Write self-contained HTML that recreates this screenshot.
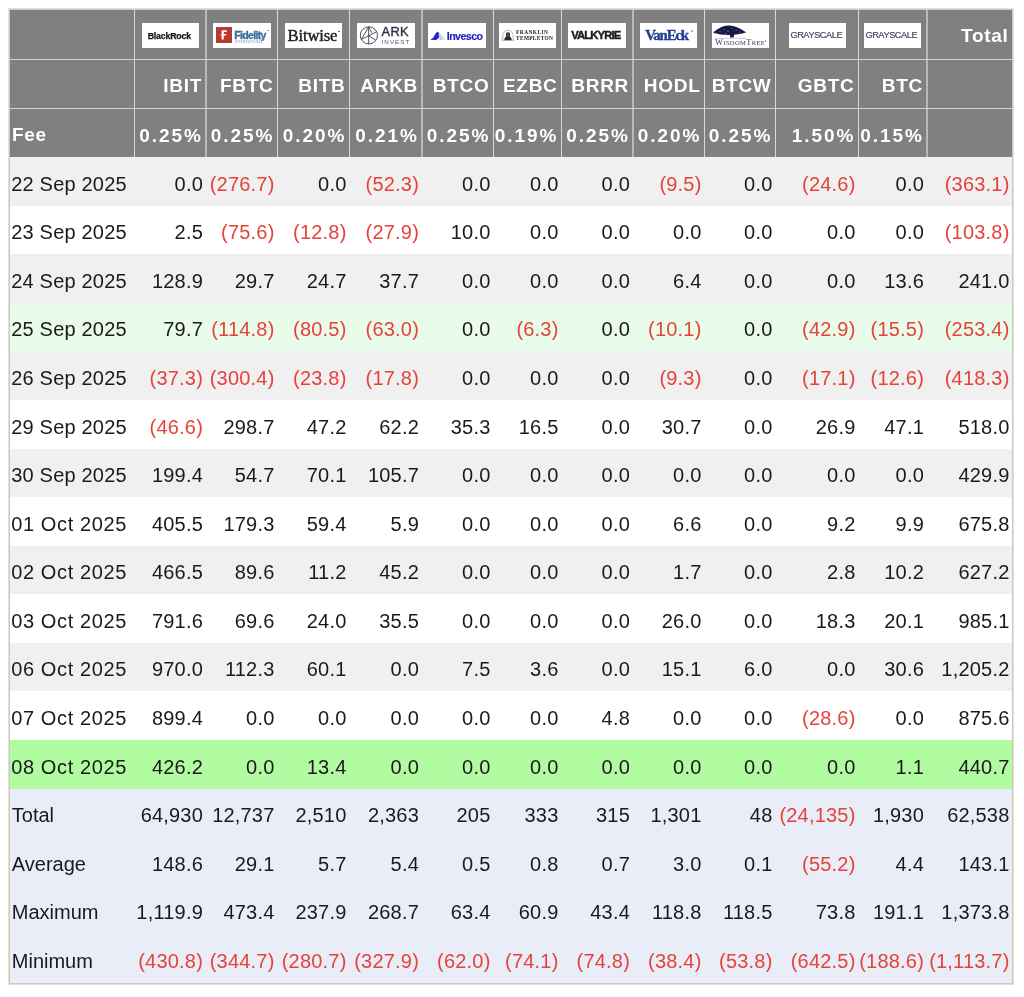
<!DOCTYPE html><html><head><meta charset="utf-8"><style>
html,body{margin:0;padding:0;background:#fff;width:1024px;height:997px;overflow:hidden}
body{position:relative;will-change:transform;font-family:"Liberation Sans",sans-serif}
div{position:absolute;box-sizing:border-box}
.t{white-space:nowrap;font-size:20px;letter-spacing:0.2px;color:#1a1a1a;text-align:right}
.h{white-space:nowrap;font-size:19px;letter-spacing:0.7px;color:#fff;font-weight:bold;text-align:right}
.r{color:#e6423a}
.fee{letter-spacing:2px}
.oct{letter-spacing:0.62px}
.lbl{letter-spacing:0px;text-indent:0.6px}
.lg{background:#fff;top:23px;height:25px;width:57px;overflow:hidden}
.lg span{position:absolute;white-space:nowrap}
</style></head><body>

<div style="left:8px;top:8px;width:1006px;height:977px;background:#e3dfd3"></div>
<div style="left:9px;top:9px;width:1004px;height:975px;background:#d0cabc"></div>
<div style="left:10px;top:10px;width:1002px;height:147px;background:#808080"></div>
<div style="left:10px;top:157.00px;width:1002px;height:49.09px;background:#f0f0f0"></div>
<div style="left:10px;top:205.59px;width:1002px;height:49.09px;background:#ffffff"></div>
<div style="left:10px;top:254.18px;width:1002px;height:49.09px;background:#f0f0f0"></div>
<div style="left:10px;top:302.76px;width:1002px;height:49.09px;background:#e8fce9"></div>
<div style="left:10px;top:351.35px;width:1002px;height:49.09px;background:#f0f0f0"></div>
<div style="left:10px;top:399.94px;width:1002px;height:49.09px;background:#ffffff"></div>
<div style="left:10px;top:448.53px;width:1002px;height:49.09px;background:#f0f0f0"></div>
<div style="left:10px;top:497.12px;width:1002px;height:49.09px;background:#ffffff"></div>
<div style="left:10px;top:545.71px;width:1002px;height:49.09px;background:#f0f0f0"></div>
<div style="left:10px;top:594.29px;width:1002px;height:49.09px;background:#ffffff"></div>
<div style="left:10px;top:642.88px;width:1002px;height:49.09px;background:#f0f0f0"></div>
<div style="left:10px;top:691.47px;width:1002px;height:49.09px;background:#ffffff"></div>
<div style="left:10px;top:740.06px;width:1002px;height:49.09px;background:#b1fba0"></div>
<div style="left:10px;top:788.65px;width:1002px;height:49.09px;background:#e9edf8"></div>
<div style="left:10px;top:837.24px;width:1002px;height:49.09px;background:#e9edf8"></div>
<div style="left:10px;top:885.82px;width:1002px;height:49.09px;background:#e9edf8"></div>
<div style="left:10px;top:934.41px;width:1002px;height:49.09px;background:#e9edf8"></div>
<div style="left:134px;top:10px;width:1px;height:147px;background:#d8d8d8"></div>
<div style="left:205px;top:10px;width:2px;height:147px;background:#b8b8b8"></div>
<div style="left:277px;top:10px;width:1px;height:147px;background:#d8d8d8"></div>
<div style="left:349px;top:10px;width:1px;height:147px;background:#d8d8d8"></div>
<div style="left:421px;top:10px;width:2px;height:147px;background:#b8b8b8"></div>
<div style="left:493px;top:10px;width:1px;height:147px;background:#d8d8d8"></div>
<div style="left:561px;top:10px;width:1px;height:147px;background:#d8d8d8"></div>
<div style="left:632px;top:10px;width:2px;height:147px;background:#b8b8b8"></div>
<div style="left:704px;top:10px;width:1px;height:147px;background:#d8d8d8"></div>
<div style="left:775px;top:10px;width:1px;height:147px;background:#d8d8d8"></div>
<div style="left:858px;top:10px;width:1px;height:147px;background:#d8d8d8"></div>
<div style="left:926px;top:10px;width:2px;height:147px;background:#b8b8b8"></div>
<div style="left:10px;top:59px;width:1002px;height:1px;background:#d2d2d2"></div>
<div style="left:10px;top:108px;width:1002px;height:1px;background:#d2d2d2"></div>
<div class="h" style="left:135px;width:67.00px;top:62.10px;height:48.60px;line-height:48.60px">IBIT</div>
<div class="h" style="left:206.5px;width:67.00px;top:62.10px;height:48.60px;line-height:48.60px">FBTC</div>
<div class="h" style="left:278px;width:67.50px;top:62.10px;height:48.60px;line-height:48.60px">BITB</div>
<div class="h" style="left:350px;width:68.00px;top:62.10px;height:48.60px;line-height:48.60px">ARKB</div>
<div class="h" style="left:422.5px;width:67.00px;top:62.10px;height:48.60px;line-height:48.60px">BTCO</div>
<div class="h" style="left:494px;width:63.50px;top:62.10px;height:48.60px;line-height:48.60px">EZBC</div>
<div class="h" style="left:562px;width:67.00px;top:62.10px;height:48.60px;line-height:48.60px">BRRR</div>
<div class="h" style="left:633.5px;width:67.00px;top:62.10px;height:48.60px;line-height:48.60px">HODL</div>
<div class="h" style="left:705px;width:66.50px;top:62.10px;height:48.60px;line-height:48.60px">BTCW</div>
<div class="h" style="left:776px;width:78.50px;top:62.10px;height:48.60px;line-height:48.60px">GBTC</div>
<div class="h" style="left:859px;width:64.00px;top:62.10px;height:48.60px;line-height:48.60px">BTC</div>
<div class="h" style="left:927.5px;width:81.00px;top:11.80px;height:48.60px;line-height:48.60px">Total</div>
<div class="h" style="left:12.0px;width:124px;top:111.10px;height:48.60px;line-height:48.60px;text-align:left">Fee</div>
<div class="h fee" style="left:135px;width:68.00px;top:111.80px;height:48.60px;line-height:48.60px">0.25%</div>
<div class="h fee" style="left:206.5px;width:68.00px;top:111.80px;height:48.60px;line-height:48.60px">0.25%</div>
<div class="h fee" style="left:278px;width:68.50px;top:111.80px;height:48.60px;line-height:48.60px">0.20%</div>
<div class="h fee" style="left:350px;width:69.00px;top:111.80px;height:48.60px;line-height:48.60px">0.21%</div>
<div class="h fee" style="left:422.5px;width:68.00px;top:111.80px;height:48.60px;line-height:48.60px">0.25%</div>
<div class="h fee" style="left:494px;width:64.50px;top:111.80px;height:48.60px;line-height:48.60px">0.19%</div>
<div class="h fee" style="left:562px;width:68.00px;top:111.80px;height:48.60px;line-height:48.60px">0.25%</div>
<div class="h fee" style="left:633.5px;width:68.00px;top:111.80px;height:48.60px;line-height:48.60px">0.20%</div>
<div class="h fee" style="left:705px;width:67.50px;top:111.80px;height:48.60px;line-height:48.60px">0.25%</div>
<div class="h fee" style="left:776px;width:79.50px;top:111.80px;height:48.60px;line-height:48.60px">1.50%</div>
<div class="h fee" style="left:859px;width:65.00px;top:111.80px;height:48.60px;line-height:48.60px">0.15%</div>
<div class="t" style="left:11.2px;width:124px;top:159.60px;height:48.59px;line-height:48.59px;text-align:left">22 Sep 2025</div>
<div class="t" style="left:135px;width:68.00px;top:159.60px;height:48.59px;line-height:48.59px">0.0</div>
<div class="t r" style="left:206.5px;width:68.00px;top:159.60px;height:48.59px;line-height:48.59px">(276.7)</div>
<div class="t" style="left:278px;width:68.50px;top:159.60px;height:48.59px;line-height:48.59px">0.0</div>
<div class="t r" style="left:350px;width:69.00px;top:159.60px;height:48.59px;line-height:48.59px">(52.3)</div>
<div class="t" style="left:422.5px;width:68.00px;top:159.60px;height:48.59px;line-height:48.59px">0.0</div>
<div class="t" style="left:494px;width:64.50px;top:159.60px;height:48.59px;line-height:48.59px">0.0</div>
<div class="t" style="left:562px;width:68.00px;top:159.60px;height:48.59px;line-height:48.59px">0.0</div>
<div class="t r" style="left:633.5px;width:68.00px;top:159.60px;height:48.59px;line-height:48.59px">(9.5)</div>
<div class="t" style="left:705px;width:67.50px;top:159.60px;height:48.59px;line-height:48.59px">0.0</div>
<div class="t r" style="left:776px;width:79.50px;top:159.60px;height:48.59px;line-height:48.59px">(24.6)</div>
<div class="t" style="left:859px;width:65.00px;top:159.60px;height:48.59px;line-height:48.59px">0.0</div>
<div class="t r" style="left:927.5px;width:82.00px;top:159.60px;height:48.59px;line-height:48.59px">(363.1)</div>
<div class="t" style="left:11.2px;width:124px;top:208.19px;height:48.59px;line-height:48.59px;text-align:left">23 Sep 2025</div>
<div class="t" style="left:135px;width:68.00px;top:208.19px;height:48.59px;line-height:48.59px">2.5</div>
<div class="t r" style="left:206.5px;width:68.00px;top:208.19px;height:48.59px;line-height:48.59px">(75.6)</div>
<div class="t r" style="left:278px;width:68.50px;top:208.19px;height:48.59px;line-height:48.59px">(12.8)</div>
<div class="t r" style="left:350px;width:69.00px;top:208.19px;height:48.59px;line-height:48.59px">(27.9)</div>
<div class="t" style="left:422.5px;width:68.00px;top:208.19px;height:48.59px;line-height:48.59px">10.0</div>
<div class="t" style="left:494px;width:64.50px;top:208.19px;height:48.59px;line-height:48.59px">0.0</div>
<div class="t" style="left:562px;width:68.00px;top:208.19px;height:48.59px;line-height:48.59px">0.0</div>
<div class="t" style="left:633.5px;width:68.00px;top:208.19px;height:48.59px;line-height:48.59px">0.0</div>
<div class="t" style="left:705px;width:67.50px;top:208.19px;height:48.59px;line-height:48.59px">0.0</div>
<div class="t" style="left:776px;width:79.50px;top:208.19px;height:48.59px;line-height:48.59px">0.0</div>
<div class="t" style="left:859px;width:65.00px;top:208.19px;height:48.59px;line-height:48.59px">0.0</div>
<div class="t r" style="left:927.5px;width:82.00px;top:208.19px;height:48.59px;line-height:48.59px">(103.8)</div>
<div class="t" style="left:11.2px;width:124px;top:256.78px;height:48.59px;line-height:48.59px;text-align:left">24 Sep 2025</div>
<div class="t" style="left:135px;width:68.00px;top:256.78px;height:48.59px;line-height:48.59px">128.9</div>
<div class="t" style="left:206.5px;width:68.00px;top:256.78px;height:48.59px;line-height:48.59px">29.7</div>
<div class="t" style="left:278px;width:68.50px;top:256.78px;height:48.59px;line-height:48.59px">24.7</div>
<div class="t" style="left:350px;width:69.00px;top:256.78px;height:48.59px;line-height:48.59px">37.7</div>
<div class="t" style="left:422.5px;width:68.00px;top:256.78px;height:48.59px;line-height:48.59px">0.0</div>
<div class="t" style="left:494px;width:64.50px;top:256.78px;height:48.59px;line-height:48.59px">0.0</div>
<div class="t" style="left:562px;width:68.00px;top:256.78px;height:48.59px;line-height:48.59px">0.0</div>
<div class="t" style="left:633.5px;width:68.00px;top:256.78px;height:48.59px;line-height:48.59px">6.4</div>
<div class="t" style="left:705px;width:67.50px;top:256.78px;height:48.59px;line-height:48.59px">0.0</div>
<div class="t" style="left:776px;width:79.50px;top:256.78px;height:48.59px;line-height:48.59px">0.0</div>
<div class="t" style="left:859px;width:65.00px;top:256.78px;height:48.59px;line-height:48.59px">13.6</div>
<div class="t" style="left:927.5px;width:82.00px;top:256.78px;height:48.59px;line-height:48.59px">241.0</div>
<div class="t" style="left:11.2px;width:124px;top:305.36px;height:48.59px;line-height:48.59px;text-align:left">25 Sep 2025</div>
<div class="t" style="left:135px;width:68.00px;top:305.36px;height:48.59px;line-height:48.59px">79.7</div>
<div class="t r" style="left:206.5px;width:68.00px;top:305.36px;height:48.59px;line-height:48.59px">(114.8)</div>
<div class="t r" style="left:278px;width:68.50px;top:305.36px;height:48.59px;line-height:48.59px">(80.5)</div>
<div class="t r" style="left:350px;width:69.00px;top:305.36px;height:48.59px;line-height:48.59px">(63.0)</div>
<div class="t" style="left:422.5px;width:68.00px;top:305.36px;height:48.59px;line-height:48.59px">0.0</div>
<div class="t r" style="left:494px;width:64.50px;top:305.36px;height:48.59px;line-height:48.59px">(6.3)</div>
<div class="t" style="left:562px;width:68.00px;top:305.36px;height:48.59px;line-height:48.59px">0.0</div>
<div class="t r" style="left:633.5px;width:68.00px;top:305.36px;height:48.59px;line-height:48.59px">(10.1)</div>
<div class="t" style="left:705px;width:67.50px;top:305.36px;height:48.59px;line-height:48.59px">0.0</div>
<div class="t r" style="left:776px;width:79.50px;top:305.36px;height:48.59px;line-height:48.59px">(42.9)</div>
<div class="t r" style="left:859px;width:65.00px;top:305.36px;height:48.59px;line-height:48.59px">(15.5)</div>
<div class="t r" style="left:927.5px;width:82.00px;top:305.36px;height:48.59px;line-height:48.59px">(253.4)</div>
<div class="t" style="left:11.2px;width:124px;top:353.95px;height:48.59px;line-height:48.59px;text-align:left">26 Sep 2025</div>
<div class="t r" style="left:135px;width:68.00px;top:353.95px;height:48.59px;line-height:48.59px">(37.3)</div>
<div class="t r" style="left:206.5px;width:68.00px;top:353.95px;height:48.59px;line-height:48.59px">(300.4)</div>
<div class="t r" style="left:278px;width:68.50px;top:353.95px;height:48.59px;line-height:48.59px">(23.8)</div>
<div class="t r" style="left:350px;width:69.00px;top:353.95px;height:48.59px;line-height:48.59px">(17.8)</div>
<div class="t" style="left:422.5px;width:68.00px;top:353.95px;height:48.59px;line-height:48.59px">0.0</div>
<div class="t" style="left:494px;width:64.50px;top:353.95px;height:48.59px;line-height:48.59px">0.0</div>
<div class="t" style="left:562px;width:68.00px;top:353.95px;height:48.59px;line-height:48.59px">0.0</div>
<div class="t r" style="left:633.5px;width:68.00px;top:353.95px;height:48.59px;line-height:48.59px">(9.3)</div>
<div class="t" style="left:705px;width:67.50px;top:353.95px;height:48.59px;line-height:48.59px">0.0</div>
<div class="t r" style="left:776px;width:79.50px;top:353.95px;height:48.59px;line-height:48.59px">(17.1)</div>
<div class="t r" style="left:859px;width:65.00px;top:353.95px;height:48.59px;line-height:48.59px">(12.6)</div>
<div class="t r" style="left:927.5px;width:82.00px;top:353.95px;height:48.59px;line-height:48.59px">(418.3)</div>
<div class="t" style="left:11.2px;width:124px;top:402.54px;height:48.59px;line-height:48.59px;text-align:left">29 Sep 2025</div>
<div class="t r" style="left:135px;width:68.00px;top:402.54px;height:48.59px;line-height:48.59px">(46.6)</div>
<div class="t" style="left:206.5px;width:68.00px;top:402.54px;height:48.59px;line-height:48.59px">298.7</div>
<div class="t" style="left:278px;width:68.50px;top:402.54px;height:48.59px;line-height:48.59px">47.2</div>
<div class="t" style="left:350px;width:69.00px;top:402.54px;height:48.59px;line-height:48.59px">62.2</div>
<div class="t" style="left:422.5px;width:68.00px;top:402.54px;height:48.59px;line-height:48.59px">35.3</div>
<div class="t" style="left:494px;width:64.50px;top:402.54px;height:48.59px;line-height:48.59px">16.5</div>
<div class="t" style="left:562px;width:68.00px;top:402.54px;height:48.59px;line-height:48.59px">0.0</div>
<div class="t" style="left:633.5px;width:68.00px;top:402.54px;height:48.59px;line-height:48.59px">30.7</div>
<div class="t" style="left:705px;width:67.50px;top:402.54px;height:48.59px;line-height:48.59px">0.0</div>
<div class="t" style="left:776px;width:79.50px;top:402.54px;height:48.59px;line-height:48.59px">26.9</div>
<div class="t" style="left:859px;width:65.00px;top:402.54px;height:48.59px;line-height:48.59px">47.1</div>
<div class="t" style="left:927.5px;width:82.00px;top:402.54px;height:48.59px;line-height:48.59px">518.0</div>
<div class="t" style="left:11.2px;width:124px;top:451.13px;height:48.59px;line-height:48.59px;text-align:left">30 Sep 2025</div>
<div class="t" style="left:135px;width:68.00px;top:451.13px;height:48.59px;line-height:48.59px">199.4</div>
<div class="t" style="left:206.5px;width:68.00px;top:451.13px;height:48.59px;line-height:48.59px">54.7</div>
<div class="t" style="left:278px;width:68.50px;top:451.13px;height:48.59px;line-height:48.59px">70.1</div>
<div class="t" style="left:350px;width:69.00px;top:451.13px;height:48.59px;line-height:48.59px">105.7</div>
<div class="t" style="left:422.5px;width:68.00px;top:451.13px;height:48.59px;line-height:48.59px">0.0</div>
<div class="t" style="left:494px;width:64.50px;top:451.13px;height:48.59px;line-height:48.59px">0.0</div>
<div class="t" style="left:562px;width:68.00px;top:451.13px;height:48.59px;line-height:48.59px">0.0</div>
<div class="t" style="left:633.5px;width:68.00px;top:451.13px;height:48.59px;line-height:48.59px">0.0</div>
<div class="t" style="left:705px;width:67.50px;top:451.13px;height:48.59px;line-height:48.59px">0.0</div>
<div class="t" style="left:776px;width:79.50px;top:451.13px;height:48.59px;line-height:48.59px">0.0</div>
<div class="t" style="left:859px;width:65.00px;top:451.13px;height:48.59px;line-height:48.59px">0.0</div>
<div class="t" style="left:927.5px;width:82.00px;top:451.13px;height:48.59px;line-height:48.59px">429.9</div>
<div class="t oct" style="left:11.2px;width:124px;top:499.72px;height:48.59px;line-height:48.59px;text-align:left">01 Oct 2025</div>
<div class="t" style="left:135px;width:68.00px;top:499.72px;height:48.59px;line-height:48.59px">405.5</div>
<div class="t" style="left:206.5px;width:68.00px;top:499.72px;height:48.59px;line-height:48.59px">179.3</div>
<div class="t" style="left:278px;width:68.50px;top:499.72px;height:48.59px;line-height:48.59px">59.4</div>
<div class="t" style="left:350px;width:69.00px;top:499.72px;height:48.59px;line-height:48.59px">5.9</div>
<div class="t" style="left:422.5px;width:68.00px;top:499.72px;height:48.59px;line-height:48.59px">0.0</div>
<div class="t" style="left:494px;width:64.50px;top:499.72px;height:48.59px;line-height:48.59px">0.0</div>
<div class="t" style="left:562px;width:68.00px;top:499.72px;height:48.59px;line-height:48.59px">0.0</div>
<div class="t" style="left:633.5px;width:68.00px;top:499.72px;height:48.59px;line-height:48.59px">6.6</div>
<div class="t" style="left:705px;width:67.50px;top:499.72px;height:48.59px;line-height:48.59px">0.0</div>
<div class="t" style="left:776px;width:79.50px;top:499.72px;height:48.59px;line-height:48.59px">9.2</div>
<div class="t" style="left:859px;width:65.00px;top:499.72px;height:48.59px;line-height:48.59px">9.9</div>
<div class="t" style="left:927.5px;width:82.00px;top:499.72px;height:48.59px;line-height:48.59px">675.8</div>
<div class="t oct" style="left:11.2px;width:124px;top:548.31px;height:48.59px;line-height:48.59px;text-align:left">02 Oct 2025</div>
<div class="t" style="left:135px;width:68.00px;top:548.31px;height:48.59px;line-height:48.59px">466.5</div>
<div class="t" style="left:206.5px;width:68.00px;top:548.31px;height:48.59px;line-height:48.59px">89.6</div>
<div class="t" style="left:278px;width:68.50px;top:548.31px;height:48.59px;line-height:48.59px">11.2</div>
<div class="t" style="left:350px;width:69.00px;top:548.31px;height:48.59px;line-height:48.59px">45.2</div>
<div class="t" style="left:422.5px;width:68.00px;top:548.31px;height:48.59px;line-height:48.59px">0.0</div>
<div class="t" style="left:494px;width:64.50px;top:548.31px;height:48.59px;line-height:48.59px">0.0</div>
<div class="t" style="left:562px;width:68.00px;top:548.31px;height:48.59px;line-height:48.59px">0.0</div>
<div class="t" style="left:633.5px;width:68.00px;top:548.31px;height:48.59px;line-height:48.59px">1.7</div>
<div class="t" style="left:705px;width:67.50px;top:548.31px;height:48.59px;line-height:48.59px">0.0</div>
<div class="t" style="left:776px;width:79.50px;top:548.31px;height:48.59px;line-height:48.59px">2.8</div>
<div class="t" style="left:859px;width:65.00px;top:548.31px;height:48.59px;line-height:48.59px">10.2</div>
<div class="t" style="left:927.5px;width:82.00px;top:548.31px;height:48.59px;line-height:48.59px">627.2</div>
<div class="t oct" style="left:11.2px;width:124px;top:596.89px;height:48.59px;line-height:48.59px;text-align:left">03 Oct 2025</div>
<div class="t" style="left:135px;width:68.00px;top:596.89px;height:48.59px;line-height:48.59px">791.6</div>
<div class="t" style="left:206.5px;width:68.00px;top:596.89px;height:48.59px;line-height:48.59px">69.6</div>
<div class="t" style="left:278px;width:68.50px;top:596.89px;height:48.59px;line-height:48.59px">24.0</div>
<div class="t" style="left:350px;width:69.00px;top:596.89px;height:48.59px;line-height:48.59px">35.5</div>
<div class="t" style="left:422.5px;width:68.00px;top:596.89px;height:48.59px;line-height:48.59px">0.0</div>
<div class="t" style="left:494px;width:64.50px;top:596.89px;height:48.59px;line-height:48.59px">0.0</div>
<div class="t" style="left:562px;width:68.00px;top:596.89px;height:48.59px;line-height:48.59px">0.0</div>
<div class="t" style="left:633.5px;width:68.00px;top:596.89px;height:48.59px;line-height:48.59px">26.0</div>
<div class="t" style="left:705px;width:67.50px;top:596.89px;height:48.59px;line-height:48.59px">0.0</div>
<div class="t" style="left:776px;width:79.50px;top:596.89px;height:48.59px;line-height:48.59px">18.3</div>
<div class="t" style="left:859px;width:65.00px;top:596.89px;height:48.59px;line-height:48.59px">20.1</div>
<div class="t" style="left:927.5px;width:82.00px;top:596.89px;height:48.59px;line-height:48.59px">985.1</div>
<div class="t oct" style="left:11.2px;width:124px;top:645.48px;height:48.59px;line-height:48.59px;text-align:left">06 Oct 2025</div>
<div class="t" style="left:135px;width:68.00px;top:645.48px;height:48.59px;line-height:48.59px">970.0</div>
<div class="t" style="left:206.5px;width:68.00px;top:645.48px;height:48.59px;line-height:48.59px">112.3</div>
<div class="t" style="left:278px;width:68.50px;top:645.48px;height:48.59px;line-height:48.59px">60.1</div>
<div class="t" style="left:350px;width:69.00px;top:645.48px;height:48.59px;line-height:48.59px">0.0</div>
<div class="t" style="left:422.5px;width:68.00px;top:645.48px;height:48.59px;line-height:48.59px">7.5</div>
<div class="t" style="left:494px;width:64.50px;top:645.48px;height:48.59px;line-height:48.59px">3.6</div>
<div class="t" style="left:562px;width:68.00px;top:645.48px;height:48.59px;line-height:48.59px">0.0</div>
<div class="t" style="left:633.5px;width:68.00px;top:645.48px;height:48.59px;line-height:48.59px">15.1</div>
<div class="t" style="left:705px;width:67.50px;top:645.48px;height:48.59px;line-height:48.59px">6.0</div>
<div class="t" style="left:776px;width:79.50px;top:645.48px;height:48.59px;line-height:48.59px">0.0</div>
<div class="t" style="left:859px;width:65.00px;top:645.48px;height:48.59px;line-height:48.59px">30.6</div>
<div class="t" style="left:927.5px;width:82.00px;top:645.48px;height:48.59px;line-height:48.59px">1,205.2</div>
<div class="t oct" style="left:11.2px;width:124px;top:694.07px;height:48.59px;line-height:48.59px;text-align:left">07 Oct 2025</div>
<div class="t" style="left:135px;width:68.00px;top:694.07px;height:48.59px;line-height:48.59px">899.4</div>
<div class="t" style="left:206.5px;width:68.00px;top:694.07px;height:48.59px;line-height:48.59px">0.0</div>
<div class="t" style="left:278px;width:68.50px;top:694.07px;height:48.59px;line-height:48.59px">0.0</div>
<div class="t" style="left:350px;width:69.00px;top:694.07px;height:48.59px;line-height:48.59px">0.0</div>
<div class="t" style="left:422.5px;width:68.00px;top:694.07px;height:48.59px;line-height:48.59px">0.0</div>
<div class="t" style="left:494px;width:64.50px;top:694.07px;height:48.59px;line-height:48.59px">0.0</div>
<div class="t" style="left:562px;width:68.00px;top:694.07px;height:48.59px;line-height:48.59px">4.8</div>
<div class="t" style="left:633.5px;width:68.00px;top:694.07px;height:48.59px;line-height:48.59px">0.0</div>
<div class="t" style="left:705px;width:67.50px;top:694.07px;height:48.59px;line-height:48.59px">0.0</div>
<div class="t r" style="left:776px;width:79.50px;top:694.07px;height:48.59px;line-height:48.59px">(28.6)</div>
<div class="t" style="left:859px;width:65.00px;top:694.07px;height:48.59px;line-height:48.59px">0.0</div>
<div class="t" style="left:927.5px;width:82.00px;top:694.07px;height:48.59px;line-height:48.59px">875.6</div>
<div class="t oct" style="left:11.2px;width:124px;top:742.66px;height:48.59px;line-height:48.59px;text-align:left">08 Oct 2025</div>
<div class="t" style="left:135px;width:68.00px;top:742.66px;height:48.59px;line-height:48.59px">426.2</div>
<div class="t" style="left:206.5px;width:68.00px;top:742.66px;height:48.59px;line-height:48.59px">0.0</div>
<div class="t" style="left:278px;width:68.50px;top:742.66px;height:48.59px;line-height:48.59px">13.4</div>
<div class="t" style="left:350px;width:69.00px;top:742.66px;height:48.59px;line-height:48.59px">0.0</div>
<div class="t" style="left:422.5px;width:68.00px;top:742.66px;height:48.59px;line-height:48.59px">0.0</div>
<div class="t" style="left:494px;width:64.50px;top:742.66px;height:48.59px;line-height:48.59px">0.0</div>
<div class="t" style="left:562px;width:68.00px;top:742.66px;height:48.59px;line-height:48.59px">0.0</div>
<div class="t" style="left:633.5px;width:68.00px;top:742.66px;height:48.59px;line-height:48.59px">0.0</div>
<div class="t" style="left:705px;width:67.50px;top:742.66px;height:48.59px;line-height:48.59px">0.0</div>
<div class="t" style="left:776px;width:79.50px;top:742.66px;height:48.59px;line-height:48.59px">0.0</div>
<div class="t" style="left:859px;width:65.00px;top:742.66px;height:48.59px;line-height:48.59px">1.1</div>
<div class="t" style="left:927.5px;width:82.00px;top:742.66px;height:48.59px;line-height:48.59px">440.7</div>
<div class="t lbl" style="left:11.2px;width:124px;top:791.25px;height:48.59px;line-height:48.59px;text-align:left">Total</div>
<div class="t" style="left:135px;width:68.00px;top:791.25px;height:48.59px;line-height:48.59px">64,930</div>
<div class="t" style="left:206.5px;width:68.00px;top:791.25px;height:48.59px;line-height:48.59px">12,737</div>
<div class="t" style="left:278px;width:68.50px;top:791.25px;height:48.59px;line-height:48.59px">2,510</div>
<div class="t" style="left:350px;width:69.00px;top:791.25px;height:48.59px;line-height:48.59px">2,363</div>
<div class="t" style="left:422.5px;width:68.00px;top:791.25px;height:48.59px;line-height:48.59px">205</div>
<div class="t" style="left:494px;width:64.50px;top:791.25px;height:48.59px;line-height:48.59px">333</div>
<div class="t" style="left:562px;width:68.00px;top:791.25px;height:48.59px;line-height:48.59px">315</div>
<div class="t" style="left:633.5px;width:68.00px;top:791.25px;height:48.59px;line-height:48.59px">1,301</div>
<div class="t" style="left:705px;width:67.50px;top:791.25px;height:48.59px;line-height:48.59px">48</div>
<div class="t r" style="left:776px;width:79.50px;top:791.25px;height:48.59px;line-height:48.59px">(24,135)</div>
<div class="t" style="left:859px;width:65.00px;top:791.25px;height:48.59px;line-height:48.59px">1,930</div>
<div class="t" style="left:927.5px;width:82.00px;top:791.25px;height:48.59px;line-height:48.59px">62,538</div>
<div class="t lbl" style="left:11.2px;width:124px;top:839.84px;height:48.59px;line-height:48.59px;text-align:left">Average</div>
<div class="t" style="left:135px;width:68.00px;top:839.84px;height:48.59px;line-height:48.59px">148.6</div>
<div class="t" style="left:206.5px;width:68.00px;top:839.84px;height:48.59px;line-height:48.59px">29.1</div>
<div class="t" style="left:278px;width:68.50px;top:839.84px;height:48.59px;line-height:48.59px">5.7</div>
<div class="t" style="left:350px;width:69.00px;top:839.84px;height:48.59px;line-height:48.59px">5.4</div>
<div class="t" style="left:422.5px;width:68.00px;top:839.84px;height:48.59px;line-height:48.59px">0.5</div>
<div class="t" style="left:494px;width:64.50px;top:839.84px;height:48.59px;line-height:48.59px">0.8</div>
<div class="t" style="left:562px;width:68.00px;top:839.84px;height:48.59px;line-height:48.59px">0.7</div>
<div class="t" style="left:633.5px;width:68.00px;top:839.84px;height:48.59px;line-height:48.59px">3.0</div>
<div class="t" style="left:705px;width:67.50px;top:839.84px;height:48.59px;line-height:48.59px">0.1</div>
<div class="t r" style="left:776px;width:79.50px;top:839.84px;height:48.59px;line-height:48.59px">(55.2)</div>
<div class="t" style="left:859px;width:65.00px;top:839.84px;height:48.59px;line-height:48.59px">4.4</div>
<div class="t" style="left:927.5px;width:82.00px;top:839.84px;height:48.59px;line-height:48.59px">143.1</div>
<div class="t lbl" style="left:11.2px;width:124px;top:888.42px;height:48.59px;line-height:48.59px;text-align:left">Maximum</div>
<div class="t" style="left:135px;width:68.00px;top:888.42px;height:48.59px;line-height:48.59px">1,119.9</div>
<div class="t" style="left:206.5px;width:68.00px;top:888.42px;height:48.59px;line-height:48.59px">473.4</div>
<div class="t" style="left:278px;width:68.50px;top:888.42px;height:48.59px;line-height:48.59px">237.9</div>
<div class="t" style="left:350px;width:69.00px;top:888.42px;height:48.59px;line-height:48.59px">268.7</div>
<div class="t" style="left:422.5px;width:68.00px;top:888.42px;height:48.59px;line-height:48.59px">63.4</div>
<div class="t" style="left:494px;width:64.50px;top:888.42px;height:48.59px;line-height:48.59px">60.9</div>
<div class="t" style="left:562px;width:68.00px;top:888.42px;height:48.59px;line-height:48.59px">43.4</div>
<div class="t" style="left:633.5px;width:68.00px;top:888.42px;height:48.59px;line-height:48.59px">118.8</div>
<div class="t" style="left:705px;width:67.50px;top:888.42px;height:48.59px;line-height:48.59px">118.5</div>
<div class="t" style="left:776px;width:79.50px;top:888.42px;height:48.59px;line-height:48.59px">73.8</div>
<div class="t" style="left:859px;width:65.00px;top:888.42px;height:48.59px;line-height:48.59px">191.1</div>
<div class="t" style="left:927.5px;width:82.00px;top:888.42px;height:48.59px;line-height:48.59px">1,373.8</div>
<div class="t lbl" style="left:11.2px;width:124px;top:937.01px;height:48.59px;line-height:48.59px;text-align:left">Minimum</div>
<div class="t r" style="left:135px;width:68.00px;top:937.01px;height:48.59px;line-height:48.59px">(430.8)</div>
<div class="t r" style="left:206.5px;width:68.00px;top:937.01px;height:48.59px;line-height:48.59px">(344.7)</div>
<div class="t r" style="left:278px;width:68.50px;top:937.01px;height:48.59px;line-height:48.59px">(280.7)</div>
<div class="t r" style="left:350px;width:69.00px;top:937.01px;height:48.59px;line-height:48.59px">(327.9)</div>
<div class="t r" style="left:422.5px;width:68.00px;top:937.01px;height:48.59px;line-height:48.59px">(62.0)</div>
<div class="t r" style="left:494px;width:64.50px;top:937.01px;height:48.59px;line-height:48.59px">(74.1)</div>
<div class="t r" style="left:562px;width:68.00px;top:937.01px;height:48.59px;line-height:48.59px">(74.8)</div>
<div class="t r" style="left:633.5px;width:68.00px;top:937.01px;height:48.59px;line-height:48.59px">(38.4)</div>
<div class="t r" style="left:705px;width:67.50px;top:937.01px;height:48.59px;line-height:48.59px">(53.8)</div>
<div class="t r" style="left:776px;width:79.50px;top:937.01px;height:48.59px;line-height:48.59px">(642.5)</div>
<div class="t r" style="left:859px;width:65.00px;top:937.01px;height:48.59px;line-height:48.59px">(188.6)</div>
<div class="t r" style="left:927.5px;width:82.00px;top:937.01px;height:48.59px;line-height:48.59px">(1,113.7)</div>
<div class="lg" style="left:142px;width:57px">
 <span style="left:5.7px;top:8.6px;font:bold 8.8px/8.8px 'Liberation Sans',sans-serif;letter-spacing:-0.2px;-webkit-text-stroke:0.25px #141414;color:#141414">BlackRock</span>
</div>
<div class="lg" style="left:213px;width:58px">
 <span style="left:2.9px;top:4.3px;width:15.8px;height:15.7px;background:#b73a30"></span>
 <svg style="position:absolute;left:2.9px;top:4.3px" width="16" height="16" viewBox="0 0 16 16"><path d="M5.6 3.2 H10.8 V4.9 H7.8 V6.9 H10.2 V8.5 H7.8 V12.4 H5.6 Z" fill="#fff"/><path d="M4.4 7.6 H5.6 M4.6 9 H5.6" stroke="#fff" stroke-width="0.6"/></svg>
 <span style="left:21.2px;top:6.6px;font:bold 10.6px/10.6px 'Liberation Sans',sans-serif;letter-spacing:-0.7px;-webkit-text-stroke:0.3px #3b6a9b;color:#3b6a9b">Fidelity</span>
 <span style="left:22px;top:19px;font:bold 2.6px/2.6px 'Liberation Sans',sans-serif;letter-spacing:0.55px;color:#8fadcc">INTERNATIONAL</span>
 <span style="left:54px;top:6.5px;width:2px;height:0.6px;background:#8aa"></span>
</div>
<div class="lg" style="left:285px;width:57px">
 <span style="left:2.6px;top:4.9px;font:16.6px/16.6px 'Liberation Serif',serif;letter-spacing:-0.15px;-webkit-text-stroke:0.4px #1a1a1a;color:#1a1a1a">Bitwise</span>
 <span style="left:53.3px;top:7.6px;width:1.6px;height:1.6px;border-radius:1px;background:#555"></span>
</div>
<div class="lg" style="left:357px;width:58px">
 <svg style="position:absolute;left:0;top:0" width="24" height="25" viewBox="0 0 24 25"><g fill="none" stroke="#3a3a52" stroke-width="0.9"><circle cx="11.9" cy="12.4" r="8.6"/><path d="M11.7 3.8 V21 M4.3 16.4 L11.7 3.8 M4.3 16.4 L19.2 9 M11.7 12.8 L18.6 17 M11.7 4.2 L14.8 9.8"/></g></svg>
 <span style="left:24.4px;top:2.5px;font:12.8px/12.8px 'Liberation Sans',sans-serif;letter-spacing:0.45px;-webkit-text-stroke:0.35px #2b2b45;color:#2b2b45">ARK</span>
 <span style="left:24.6px;top:15.8px;font:6.2px/6.2px 'Liberation Sans',sans-serif;letter-spacing:1.05px;color:#55556a">INVEST</span>
</div>
<div class="lg" style="left:428px;width:58px">
 <svg style="position:absolute;left:0;top:0" width="18" height="25" viewBox="0 0 18 25"><path d="M2.7 16.6 L5.2 14.8 L7.6 10.4 L9.6 8.6 L10.6 9.6 L11.2 13.5 L10 16 L8.6 16.6 L7.6 17.2 L5.6 16.8 L3.6 17.3 Z" fill="#2323c9"/><path d="M10.6 9.6 L16.3 16.6 M10.6 12 L14.2 16.6 M11 14.4 L12.8 16.8" stroke="#8c8ce0" stroke-width="0.8" fill="none"/></svg>
 <span style="left:18.8px;top:7.5px;font:bold 10.6px/10.6px 'Liberation Sans',sans-serif;letter-spacing:-0.55px;-webkit-text-stroke:0.15px #2222c8;color:#2222c8">Invesco</span>
</div>
<div class="lg" style="left:498.5px;width:57px">
 <svg style="position:absolute;left:0;top:0" width="17" height="25" viewBox="0 0 17 25"><path d="M3.8 17 V12.8 A5.2 5.6 0 0 1 14.2 12.8 V17" fill="none" stroke="#999" stroke-width="0.7"/><ellipse cx="9" cy="11.6" rx="2.1" ry="2.6" fill="#555"/><path d="M5.2 17.2 C5.4 14.6 6.8 13.6 9 13.6 C11.2 13.6 12.6 14.6 12.8 17.2 Z" fill="#2a2a2a"/><path d="M7.6 10 V16.5 M10.4 10 V16.5" stroke="#222" stroke-width="0.8"/><path d="M2.6 17.3 H15.4" stroke="#888" stroke-width="0.6"/></svg>
 <span style="left:17.6px;top:6.9px;font:bold 5.4px/5.4px 'Liberation Serif',serif;letter-spacing:0.45px;color:#222">FRANKLIN</span>
 <span style="left:17.6px;top:12.9px;font:bold 5.4px/5.4px 'Liberation Serif',serif;letter-spacing:0.3px;color:#222">TEMPLETON</span>
</div>
<div class="lg" style="left:568px;width:58px">
 <span style="left:3.2px;top:6.9px;font:bold 11.3px/11.3px 'Liberation Sans',sans-serif;letter-spacing:-0.9px;-webkit-text-stroke:0.45px #1e1e1e;color:#1e1e1e">VALKYRIE</span>
</div>
<div class="lg" style="left:640px;width:57px">
 <span style="left:5.2px;top:5.2px;font:bold 14.8px/14.8px 'Liberation Serif',serif;letter-spacing:-1.15px;-webkit-text-stroke:0.35px #1f3e8c;color:#1f3e8c">VanEck</span>
 <span style="left:51px;top:7px;width:1.6px;height:1.6px;border-radius:1px;background:#8898c0"></span>
</div>
<div class="lg" style="left:712px;width:56.5px">
 <svg style="position:absolute;left:0;top:0" width="40" height="18" viewBox="0 0 40 18"><path d="M1.3 9.8 C3 7.6 8 4.6 12 3.1 C15 2.2 19 2.3 22 3.3 C27 5 31 7.2 34 9.3 C32 10.6 27 11.3 22 11.7 L21.8 14.5 L18 14.5 L18 12 C13 12.1 6 11.6 1.3 9.8 Z" fill="#17174a"/><g fill="#fff" opacity="0.55"><circle cx="8" cy="8.6" r="0.6"/><circle cx="12" cy="6.4" r="0.5"/><circle cx="16" cy="8.2" r="0.6"/><circle cx="20" cy="5.2" r="0.5"/><circle cx="24" cy="7.6" r="0.5"/><circle cx="28" cy="9" r="0.6"/><circle cx="14" cy="10.6" r="0.5"/><circle cx="5" cy="10.2" r="0.5"/></g><path d="M2.5 15.3 H34" stroke="#c4c4d8" stroke-width="0.9"/></svg>
 <span style="left:3px;top:16.2px;font:8.4px/8.4px 'Liberation Serif',serif;letter-spacing:0.35px;color:#3a3a6a">W<span style="position:static;font-size:6.6px">ISDOM</span>T<span style="position:static;font-size:6.6px">REE</span></span><span style="left:52.6px;top:17.4px;width:1.4px;height:1.4px;border-radius:1px;background:#8888a8"></span>
</div>
<div class="lg" style="left:789px;width:57px">
 <span style="left:1.4px;top:7.7px;font:9.2px/9.2px 'Liberation Sans',sans-serif;letter-spacing:-0.4px;-webkit-text-stroke:0.2px #4a4562;color:#4a4562">GRAYSCALE</span>
</div>
<div class="lg" style="left:864px;width:57px">
 <span style="left:1.4px;top:7.7px;font:9.2px/9.2px 'Liberation Sans',sans-serif;letter-spacing:-0.4px;-webkit-text-stroke:0.2px #4a4562;color:#4a4562">GRAYSCALE</span>
</div>

</body></html>
